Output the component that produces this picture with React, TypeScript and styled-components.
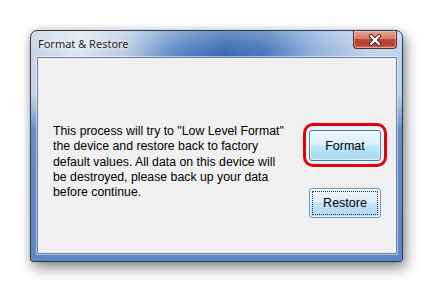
import React from "react";
import styled, { createGlobalStyle } from "styled-components";

const Global = createGlobalStyle`
  html, body { margin: 0; padding: 0; background: #ffffff; }
  body { width: 434px; height: 292px; overflow: hidden; }
`;

const Page = styled.div`
  padding: 30px 0 0 30px;
`;

const Window = styled.div`
  box-sizing: border-box;
  width: 373px;
  height: 232px;
  display: flex;
  flex-direction: column;
  padding: 0 5px 7px 6px;
  border: 1px solid #2f3a48;
  border-radius: 7px 7px 3px 3px;
  box-shadow: 3px 6px 14px rgba(0, 0, 0, 0.45), 0 0 6px rgba(0, 0, 0, 0.15);
  background:
    linear-gradient(to bottom, rgba(255,255,255,0.25) 0px, rgba(255,255,255,0) 20px),
    linear-gradient(to bottom, rgba(92,136,198,0) 0px, rgba(92,136,198,0) 62px, rgba(92,136,198,0.95) 100px, #5a87c5 100%),
    linear-gradient(100deg, #c3d2e4 0%, #dde7f2 12%, #b9cce3 24%, #5f8bc6 36%, #3b6cb3 48%, #4d7bbd 58%, #95b5dd 70%, #c3d6ed 84%, #b7cde8 100%);
`;

const TitleBar = styled.div`
  height: 26px;
  display: flex;
  align-items: flex-start;
`;

const Title = styled.div`
  margin-top: 5px;
  padding-left: 1px;
  font-family: "Noto Sans", "Open Sans", sans-serif;
  font-size: 11px;
  line-height: 16px;
  color: #1b1b1b;
  text-shadow: 0 0 6px rgba(255,255,255,0.9), 0 0 3px rgba(255,255,255,0.9);
`;

const CloseButton = styled.div`
  margin-left: auto;
  box-sizing: border-box;
  width: 44px;
  height: 18px;
  border: 1px solid #5a2a24;
  border-top: none;
  border-radius: 0 0 4px 4px;
  background: linear-gradient(to bottom, #e6a597 0%, #d47e6d 45%, #bd4332 50%, #b93e30 80%, #d27561 100%);
  box-shadow: inset 0 0 0 1px rgba(255, 220, 210, 0.45);
  display: flex;
  align-items: center;
  justify-content: center;
`;

const Client = styled.div`
  flex: 1;
  box-sizing: border-box;
  border: 1px solid #6c80a0;
  box-shadow: 0 0 0 1px rgba(255,255,255,0.5);
  background: #f0f0f0;
  display: flex;
  justify-content: space-between;
  align-items: flex-start;
  padding: 66px 15px 0 15px;
`;

const Message = styled.div`
  font-family: "Liberation Sans", Arial, sans-serif;
  font-size: 12.3px;
  line-height: 15.3px;
  color: #000;
  white-space: nowrap;
`;

const ButtonColumn = styled.div`
  margin-top: 6px;
  display: flex;
  flex-direction: column;
  gap: 27px;
`;

const ButtonWrap = styled.div`
  position: relative;
`;

const Highlight = styled.div`
  position: absolute;
  top: -7px;
  left: -6px;
  right: -6px;
  bottom: -6px;
  border: 3px solid #e4000f;
  border-radius: 10px;
  pointer-events: none;
`;

const Button = styled.div<{ $height: number; $focused?: boolean }>`
  position: relative;
  box-sizing: border-box;
  width: 72px;
  height: ${(p) => p.$height}px;
  border: 1px solid ${(p) => (p.$focused ? "#6a95bd" : "#3c7fb1")};
  border-radius: 3px;
  background: ${(p) =>
    p.$focused
      ? "linear-gradient(to bottom, #eef7fd 0%, #dcedf9 48%, #c6e3f6 52%, #b4daf2 100%)"
      : "linear-gradient(to bottom, #eaf6fd 0%, #d9f0fc 48%, #bee6fd 52%, #a7d9f5 100%)"};
  box-shadow: inset 0 0 0 1px rgba(255, 255, 255, 0.7);
  display: flex;
  align-items: center;
  justify-content: center;
  font-family: "Liberation Sans", Arial, sans-serif;
  font-size: 12.5px;
  color: #000;
`;

const FocusRect = styled.div`
  position: absolute;
  inset: 2px;
  border: 1px dotted #2a3a4a;
  border-radius: 1px;
  pointer-events: none;
`;

export default function App() {
  return (
    <>
      <Global />
      <Page>
        <Window>
          <TitleBar>
            <Title>Format &amp; Restore</Title>
            <CloseButton>
              <svg width="14" height="12" viewBox="0 0 14 12">
                <path d="M3 2 L11 10 M11 2 L3 10" stroke="#4a2320" strokeWidth="4.2" strokeLinecap="round" />
                <path d="M3 2 L11 10 M11 2 L3 10" stroke="#ffffff" strokeWidth="2.4" strokeLinecap="round" />
              </svg>
            </CloseButton>
          </TitleBar>
          <Client>
            <Message>
              This process will try to "Low Level Format"
              <br />
              the device and restore back to factory
              <br />
              default values. All data on this device will
              <br />
              be destroyed, please back up your data
              <br />
              before continue.
            </Message>
            <ButtonColumn>
              <ButtonWrap>
                <Button $height={31}>Format</Button>
                <Highlight />
              </ButtonWrap>
              <ButtonWrap>
                <Button $height={30} $focused>
                  Restore
                  <FocusRect />
                </Button>
              </ButtonWrap>
            </ButtonColumn>
          </Client>
        </Window>
      </Page>
    </>
  );
}
